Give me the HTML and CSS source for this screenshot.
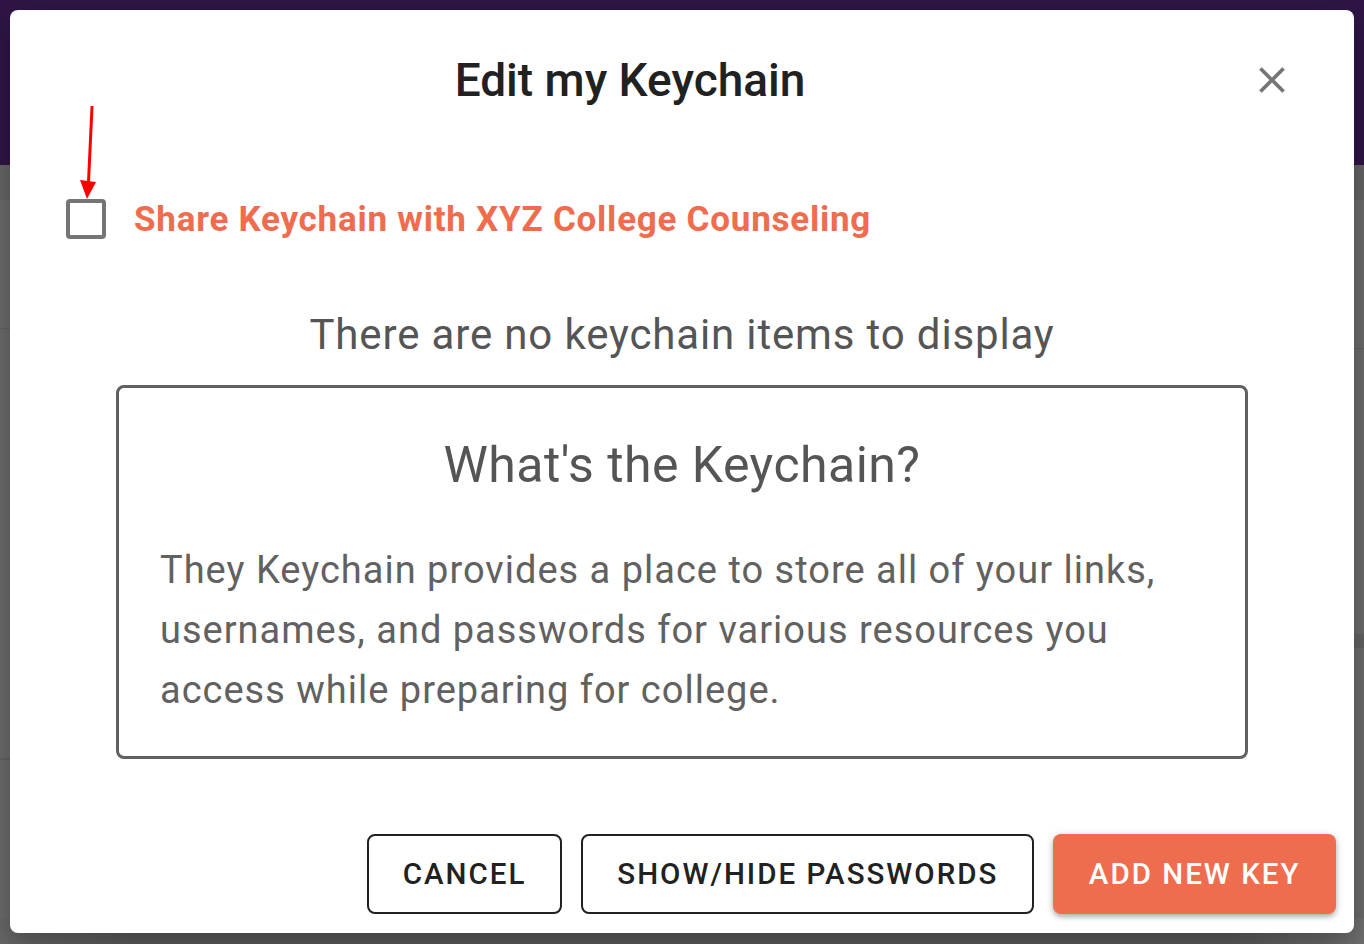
FILE: index.html
```html
<!DOCTYPE html>
<html>
  <head>
    <meta charset="utf-8">
    <title>Edit my Keychain</title>
    <link rel="stylesheet" href="styles.css">
  </head>
  <body>

    <div id="page">
      <div class="topbar"></div>
      <div class="subbar"></div>
      <div class="content">
        <div class="panel panel-left"></div>
        <div class="panel panel-right"></div>
      </div>
      <div class="footer"></div>
    </div>

    <div class="dialog">
      <div class="dialog-head">
        <h2 class="dialog-title">Edit my Keychain</h2>
        <button class="close" type="button" aria-label="close">
          <svg width="44" height="44" viewBox="0 0 24 24"><path fill="#757575" d="M19 6.41 17.59 5 12 10.59 6.41 5 5 6.41 10.59 12 5 17.59 6.41 19 12 13.41 17.59 19 19 17.59 13.41 12z"/></svg>
        </button>
      </div>

      <label class="share">
        <span class="box"></span>
        <span class="share-text">Share Keychain with XYZ College Counseling</span>
      </label>

      <div class="empty">There are no keychain items to display</div>

      <div class="info">
        <h3 class="info-title">What's the Keychain?</h3>
        <p class="info-text">They Keychain provides a place to store all of your links, usernames, and passwords for various resources you access while preparing for college.</p>
      </div>

      <div class="actions">
        <button class="btn" type="button">Cancel</button>
        <button class="btn" type="button">Show/Hide Passwords</button>
        <button class="btn btn-main" type="button">Add New Key</button>
      </div>

      <!-- annotation arrow pointing at the checkbox -->
      <svg class="arrow" width="30" height="100" viewBox="0 0 30 100">
        <line x1="17" y1="1" x2="13.5" y2="76" stroke="#ff0000" stroke-width="3" stroke-linecap="round"/>
        <polygon points="5,74 21,76 12,93" fill="#ff0000"/>
      </svg>
    </div>

  </body>
</html>
```

FILE: styles.css
```css
*{
  box-sizing: border-box;
}

body{
  margin: 0;
  font-family: Roboto, "Liberation Sans", sans-serif;
  background: #5c5c5c;
  overflow: hidden;
}

#page{
  height: 944px;
  display: flex;
  flex-direction: column;
}

.topbar{
  flex-shrink: 0;
  height: 165px;
  background: #2f1546;
}

.subbar{
  flex-shrink: 0;
  height: 35px;
  background: #656565;
}

.content{
  flex: 1;
  display: flex;
  justify-content: space-between;
  background: #6b6b6b;
}

.panel{
  width: 420px;
}

.panel-left{
  margin-top: 128px;
  height: 432px;
  border-top: 1px solid #616161;
  border-bottom: 2px solid #616161;
}

.panel-right{
  margin-top: 148px;
  height: 300px;
  border-top: 1px solid #616161;
  border-bottom: 14px solid #636363;
}

.footer{
  flex-shrink: 0;
  height: 26px;
  background: linear-gradient(90deg, #676767, #5a5a5a 10%, #5a5a5a 90%, #707070);
}

.dialog{
  position: absolute;
  top: 10px;
  left: 10px;
  width: 1344px;
  height: 923px;
  background: #fff;
  border-radius: 8px;
  box-shadow: 0 10px 30px rgba(0,0,0,0.3);
}

.dialog-head{
  display: flex;
  align-items: center;
  padding: 40px 21px 0 40px;
}

.dialog-title{
  flex: 1;
  margin: 0;
  text-align: center;
  font-size: 46px;
  line-height: 60px;
  font-weight: 500;
  color: #212121;
}

.close{
  width: 123px;
  height: 60px;
  border: 0;
  background: none;
  padding: 0;
  display: flex;
  align-items: center;
  justify-content: center;
}

.share{
  display: flex;
  align-items: center;
  height: 40px;
  margin-top: 89px;
  padding-left: 56px;
}

.box{
  width: 40px;
  height: 40px;
  border: 4px solid #757575;
  border-radius: 4px;
}

.share-text{
  margin-left: 28px;
  font-size: 35px;
  letter-spacing: 0.75px;
  font-weight: 700;
  color: #ef6c4e;
}

.empty{
  margin-top: 72px;
  text-align: center;
  font-size: 42px;
  letter-spacing: 0.85px;
  line-height: 48px;
  color: #555;
}

.info{
  margin: 26px 106px 0;
  height: 374px;
  border: 3px solid #616161;
  border-radius: 8px;
  padding: 47px 41px 0;
  color: #555;
}

.info-title{
  margin: 0;
  text-align: center;
  font-size: 50px;
  letter-spacing: 0.45px;
  line-height: 60px;
  font-weight: 400;
}

.info-text{
  margin: 45px 0 0;
  font-size: 38px;
  letter-spacing: 1px;
  line-height: 60px;
  color: #616161;
}

.actions{
  display: flex;
  justify-content: flex-end;
  gap: 19px;
  margin-top: 75px;
  padding-right: 18px;
}

.btn{
  height: 80px;
  padding: 0 34px;
  border: 2px solid #212121;
  border-radius: 8px;
  background: #fff;
  font-family: Roboto, "Liberation Sans", sans-serif;
  font-size: 29.5px;
  font-weight: 500;
  letter-spacing: 2px;
  text-transform: uppercase;
  color: #212121;
}

.btn-main{
  border: 0;
  background: #ef6c4e;
  color: #fff;
  padding: 0 35.5px;
  box-shadow: 0 3px 5px rgba(0,0,0,0.25), 0 1px 10px rgba(0,0,0,0.12);
}

.arrow{
  position: absolute;
  left: 65px;
  top: 96px;
}
```
